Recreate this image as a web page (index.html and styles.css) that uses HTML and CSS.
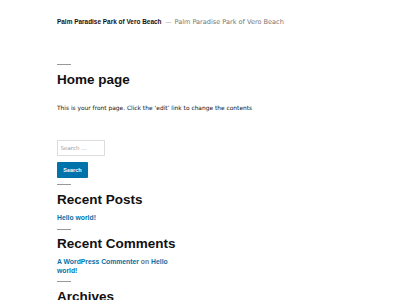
FILE: index.html
```html
<!DOCTYPE html>
<html lang="en">
<head>
<meta charset="utf-8">
<title>Palm Paradise Park of Vero Beach</title>
<link rel="stylesheet" href="styles.css">
</head>
<body>
<div class="page">
  <header class="site-header">
    <span class="site-title">Palm Paradise Park of Vero Beach</span>
    <span class="dash">—</span>
    <span class="site-description">Palm Paradise Park of Vero Beach</span>
  </header>
  <main class="entry">
    <div class="sep sep-first"></div>
    <h1 class="entry-title">Home page</h1>
    <p class="entry-content">This is your front page. Click the ‘edit’ link to change the contents</p>
  </main>
  <aside class="widgets">
    <form class="search-form">
      <input class="search-field" type="search" placeholder="Search …">
      <button class="search-submit" type="button">Search</button>
    </form>
    <div class="sep"></div>
    <h2 class="widget-title">Recent Posts</h2>
    <div class="widget-list"><a class="wlink" href="#">Hello world!</a></div>
    <div class="sep"></div>
    <h2 class="widget-title">Recent Comments</h2>
    <div class="comment-line"><a class="wlink" href="#">A WordPress Commenter</a> <span class="on">on</span> <a class="wlink" href="#">Hello world!</a></div>
    <div class="sep sep-last"></div>
    <h2 class="widget-title">Archives</h2>
  </aside>
</div>
</body>
</html>
```

FILE: styles.css
```css
html, body {
  margin: 0;
  padding: 0;
  background: #ffffff;
}
body {
  font-family: "Liberation Sans", Arial, sans-serif;
  color: #111111;
}
.page {
  padding-left: 57px;
  padding-top: 17px;
}
.site-header {
  display: flex;
  align-items: baseline;
  line-height: 10px;
  height: 10px;
  white-space: nowrap;
}
.site-title {
  font-family: "Liberation Sans", Arial, sans-serif;
  font-weight: 700;
  font-size: 6.45px;
  color: #111111;
}
.dash {
  font-family: "DejaVu Sans", sans-serif;
  font-size: 6px;
  color: #999999;
  margin: 0 3px 0 4px;
}
.site-description {
  font-family: "DejaVu Sans", sans-serif;
  font-size: 6.55px;
  color: #767676;
}
.sep {
  width: 14px;
  height: 1px;
  background: #999999;
  margin-top: 6px;
}
.sep-first {
  margin-top: 37px;
}
.entry-title,
.widget-title {
  margin: 6.5px 0 0 0;
  font-family: "Liberation Sans", Arial, sans-serif;
  font-weight: 700;
  font-size: 13.5px;
  line-height: 16px;
  color: #111111;
}
.entry-content {
  margin: 15px 0 0 0;
  font-family: "DejaVu Sans", sans-serif;
  font-size: 5.9px;
  line-height: 10px;
  color: #111111;
  white-space: nowrap;
}
.widgets {
  width: 122px;
}
.search-form {
  margin-top: 27.5px;
  display: flex;
  flex-direction: column;
  align-items: flex-start;
}
.search-field {
  box-sizing: border-box;
  width: 48px;
  height: 16px;
  margin: 0;
  padding: 0 0 0 2.5px;
  border: 1px solid #dddddd;
  border-radius: 0;
  background: #ffffff;
  font-family: "DejaVu Sans", sans-serif;
  font-size: 5.5px;
  color: #111111;
  outline: none;
}
.search-field::placeholder {
  color: #a0a0a0;
}
.search-submit {
  box-sizing: border-box;
  width: 31px;
  height: 16px;
  margin-top: 6px;
  padding: 0;
  border: none;
  border-radius: 1px;
  background: #0073aa;
  color: #ffffff;
  font-family: "Liberation Sans", Arial, sans-serif;
  font-weight: 700;
  font-size: 5.5px;
}
.widget-list {
  margin-top: 5.3px;
  font-size: 6.8px;
  line-height: 10px;
}
.wlink {
  color: #0073aa;
  font-weight: 700;
  text-decoration: none;
  font-size: 6.8px;
}
.comment-line {
  margin-top: 5.1px;
  font-size: 6.8px;
  line-height: 9px;
}
.on {
  color: #767676;
  font-weight: 700;
}
.sep-last {
  margin-top: 5.4px;
}
.widgets .widget-title:last-child {
  margin-top: 7px;
}
```
